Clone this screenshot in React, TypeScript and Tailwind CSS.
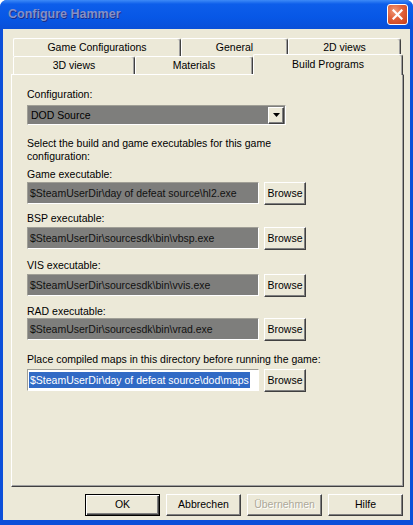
import React from "react";

const font = { fontFamily: '"Liberation Sans", Arial, sans-serif' };

const backTabs = [
  { label: "Game Configurations", w: "w-[168px]" },
  { label: "General", w: "w-[107px]" },
  { label: "2D views", w: "w-[113px]" },
];

const frontTabs = [
  { label: "3D views", w: "w-[122px]" },
  { label: "Materials", w: "w-[118px]" },
];

const paths = [
  { label: "Game executable:", value: "$SteamUserDir\\day of defeat source\\hl2.exe", labelMt: "mt-[5px]", rowMt: "mt-[1px]" },
  { label: "BSP executable:", value: "$SteamUserDir\\sourcesdk\\bin\\vbsp.exe", labelMt: "mt-[7px]", rowMt: "mt-[2px]" },
  { label: "VIS executable:", value: "$SteamUserDir\\sourcesdk\\bin\\vvis.exe", labelMt: "mt-[9px]", rowMt: "mt-[2px]" },
  { label: "RAD executable:", value: "$SteamUserDir\\sourcesdk\\bin\\vrad.exe", labelMt: "mt-[8px]", rowMt: "mt-[0px]" },
];

function Tab({ label, w }: { label: string; w: string }) {
  return (
    <div
      className={`${w} h-[18px] flex items-center justify-center border-t border-l border-white border-r border-r-[#404040] rounded-tl-[2px] rounded-tr-[3px] shadow-[inset_-1px_0_0_#a0a0a0] text-[10.5px] text-black`}
    >
      {label}
    </div>
  );
}

function Button({
  children,
  w,
  h = "h-[22px]",
  isDefault = false,
  disabled = false,
}: {
  children: React.ReactNode;
  w: string;
  h?: string;
  isDefault?: boolean;
  disabled?: boolean;
}) {
  return (
    <div
      className={`${w} ${h} flex items-center justify-center bg-[#ece9d8] text-[10.5px] ${
        isDefault
          ? "border border-black shadow-[inset_1px_1px_0_#ffffff,inset_-1px_-1px_0_#404040,inset_-2px_-2px_0_#808080]"
          : "border border-t-white border-l-white border-r-[#404040] border-b-[#404040] shadow-[inset_-1px_-1px_0_#808080]"
      } ${disabled ? "text-[#aca899] [text-shadow:1px_1px_0_#ffffff]" : "text-black"}`}
    >
      {children}
    </div>
  );
}

function PathField({ value, selected = false }: { value: string; selected?: boolean }) {
  return (
    <div
      className={`w-[232px] h-[22px] flex items-center border border-t-[#a09f96] border-l-[#a09f96] border-r-white border-b-white ${
        selected ? "bg-white px-[1px]" : "bg-[#7e7e7c] pl-[2px]"
      }`}
    >
      {selected ? (
        <span className="bg-[#316ac5] text-white text-[10.5px] leading-[16px] px-[1px] whitespace-nowrap">{value}</span>
      ) : (
        <span className="text-[#111] text-[10.5px] whitespace-nowrap">{value}</span>
      )}
    </div>
  );
}

export default function App() {
  return (
    <div className="w-[413px] h-[525px] flex flex-col bg-[#0b4fd9] rounded-t-[7px] overflow-hidden" style={font}>
      {/* title bar */}
      <div className="h-[29px] shrink-0 flex items-center justify-between bg-[linear-gradient(180deg,#3d8af7_0%,#0d5eea_14%,#0757e6_60%,#0a4fd8_100%)]">
        <span className="ml-[8px] text-[12.5px] font-bold text-[#8590c6] [text-shadow:1px_1px_0_#1b2f8a]">
          Configure Hammer
        </span>
        <div className="mr-[5px] w-[21px] h-[21px] rounded-[3px] border border-white bg-[radial-gradient(circle_at_35%_30%,#f09a78_0%,#e0603a_45%,#c83d17_100%)] flex items-center justify-center">
          <svg width="11" height="11" viewBox="0 0 11 11">
            <path d="M1.5 1.5 L9.5 9.5 M9.5 1.5 L1.5 9.5" stroke="#ffffff" strokeWidth="2.2" strokeLinecap="square" />
          </svg>
        </div>
      </div>

      {/* dialog body */}
      <div className="mx-[3px] mb-[5px] flex-1 bg-[#ece9d8] flex flex-col pt-[9px] pl-[8px] pr-[6px]">
        {/* tab strip, back row */}
        <div className="flex ml-[2px]">
          {backTabs.map((t) => (
            <Tab key={t.label} label={t.label} w={t.w} />
          ))}
        </div>
        {/* tab strip, front row */}
        <div className="flex ml-[2px] h-[18px] items-end relative z-10">
          {frontTabs.map((t) => (
            <Tab key={t.label} label={t.label} w={t.w} />
          ))}
          <div className="w-[150px] h-[21px] -mb-[1px] flex items-start justify-center pt-[2px] bg-[#ece9d8] border-t border-l border-white border-r border-r-[#404040] rounded-tl-[2px] rounded-tr-[3px] shadow-[inset_-1px_0_0_#a0a0a0] text-[10.5px] text-black">
            Build Programs
          </div>
        </div>

        {/* tab page */}
        <div className="w-[393px] h-[413px] shrink-0 border border-t-white border-l-white border-r-[#404040] border-b-[#404040] shadow-[inset_-1px_-1px_0_#a0a0a0] pl-[15px] flex flex-col text-[10.5px] text-black leading-[13px]">
          <div className="mt-[13px]">Configuration:</div>
          <div className="mt-[4px] w-[259px] h-[20px] flex items-center border border-t-[#a09f96] border-l-[#a09f96] border-r-white border-b-white bg-[#7e7e7c]">
            <span className="flex-1 pl-[3px] text-black">DOD Source</span>
            <div className="w-[16px] h-[17px] mr-[1px] flex items-center justify-center bg-[#ece9d8] border border-t-white border-l-white border-r-[#404040] border-b-[#404040] shadow-[inset_-1px_-1px_0_#808080]">
              <svg width="7" height="4" viewBox="0 0 7 4">
                <path d="M0 0 H7 L3.5 4 Z" fill="#000" />
              </svg>
            </div>
          </div>

          <div className="mt-[12px] w-[255px]">
            Select the build and game executables for this game configuration:
          </div>

          {paths.map((p) => (
            <React.Fragment key={p.label}>
              <div className={p.labelMt}>{p.label}</div>
              <div className={`${p.rowMt} flex items-start gap-[5px]`}>
                <PathField value={p.value} />
                <Button w="w-[42px]" h="h-[23px]">Browse</Button>
              </div>
            </React.Fragment>
          ))}

          <div className="mt-[12px]">Place compiled maps in this directory before running the game:</div>
          <div className="mt-[3px] flex items-start gap-[5px]">
            <PathField value="$SteamUserDir\day of defeat source\dod\maps" selected />
            <Button w="w-[42px]" h="h-[23px]">Browse</Button>
          </div>
        </div>

        {/* dialog buttons */}
        <div className="mt-[7px] flex justify-end gap-[6px] pr-[1px]">
          <Button w="w-[75px]" isDefault>OK</Button>
          <Button w="w-[75px]">Abbrechen</Button>
          <Button w="w-[75px]" disabled>Übernehmen</Button>
          <Button w="w-[75px]">Hilfe</Button>
        </div>
      </div>
    </div>
  );
}
